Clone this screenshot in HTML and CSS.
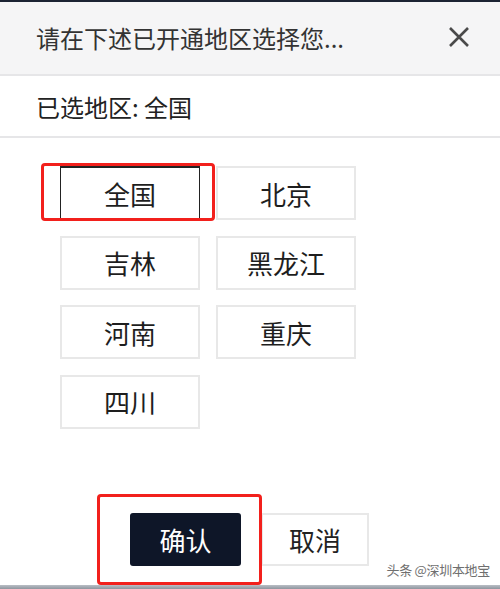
FILE: index.html
```html
<!DOCTYPE html>
<html lang="zh-CN">
<head>
    <meta charset="UTF-8">
    <meta name="viewport" content="width=device-width, initial-scale=1.0">
    <title>选择地区</title>
    <link rel="stylesheet" href="styles.css">
</head>
<body>
    <div class="page">
        <div class="topline"></div>
        <div class="header">
            <span class="title">请在下述已开通地区选择您...</span>
            <span class="close">
                <svg width="22" height="22" viewBox="0 0 22 22">
                    <path d="M2 2 L20 20 M20 2 L2 20" stroke="#4a4a4a" stroke-width="2.6" fill="none"/>
                </svg>
            </span>
        </div>
        <div class="current">已选地区: 全国</div>
        <div class="regions">
            <div class="region is-active">全国</div>
            <div class="region">北京</div>
            <div class="region">吉林</div>
            <div class="region">黑龙江</div>
            <div class="region">河南</div>
            <div class="region">重庆</div>
            <div class="region">四川</div>
        </div>
        <div class="footer">
            <button class="btn btn-confirm">确认</button>
            <button class="btn btn-cancel">取消</button>
        </div>
        <div class="bottombar"></div>
        <div class="watermark">头条 @深圳本地宝</div>
    </div>
</body>
</html>
```

FILE: styles.css
```css
html, body {
    margin: 0;
    height: 589px;
    overflow: hidden;
    background: #fff;
}
.page {
    position: relative;
    height: 589px;
    display: flex;
    flex-direction: column;
    font-family: "Noto Sans CJK SC", "Noto Sans", sans-serif;
    color: #222;
}
.topline {
    height: 2px;
    background: #1c2333;
}
.header {
    height: 72px;
    background: #f5f5f6;
    border-bottom: 2px solid #e6e6e8;
    display: flex;
    align-items: center;
    justify-content: space-between;
    padding: 0 30px 0 36px;
}
.title {
    font-size: 24px;
    color: #333;
    line-height: 1;
}
.close {
    display: flex;
    margin-top: -2px;
}
.current {
    height: 60px;
    border-bottom: 2px solid #e6e6e8;
    display: flex;
    align-items: center;
    padding-left: 36px;
    font-size: 24px;
    color: #222;
}
.regions {
    display: grid;
    grid-template-columns: 140px 140px;
    grid-auto-rows: 54px;
    column-gap: 16px;
    row-gap: 15.5px;
    padding: 28px 0 0 60px;
}
.region {
    position: relative;
    box-sizing: border-box;
    border: 2px solid #e8e8e8;
    display: flex;
    align-items: center;
    justify-content: center;
    font-size: 26px;
    color: #1e1e1e;
}
.region.is-active {
    border: 1px solid #222;
    border-top-width: 2px;
}
.region.is-active::after {
    content: "";
    position: absolute;
    left: -20px;
    right: -16px;
    top: -5px;
    bottom: -2px;
    border: 3px solid #f2201c;
    border-radius: 4px;
}
.footer {
    margin-top: auto;
    display: flex;
    gap: 20px;
    padding: 0 0 19px 130px;
}
.btn {
    box-sizing: border-box;
    height: 53px;
    font-family: inherit;
    font-size: 26px;
    padding: 0;
}
.btn-confirm {
    position: relative;
    width: 111px;
    background: #0e1628;
    color: #fff;
    border: none;
    border-radius: 3px;
}
.btn-confirm::after {
    content: "";
    position: absolute;
    left: -33px;
    right: -21px;
    top: -19px;
    bottom: -19px;
    border: 3px solid #f2201c;
    border-radius: 4px;
}
.btn-cancel {
    width: 108px;
    background: #fff;
    color: #222;
    border: 2px solid #e8e8e8;
}
.bottombar {
    height: 4px;
    background: linear-gradient(#b9bec5, #8e959e);
}
.watermark {
    position: absolute;
    right: 10px;
    bottom: 10px;
    font-size: 13px;
    color: #6f6f6f;
    letter-spacing: -0.3px;
}
```
